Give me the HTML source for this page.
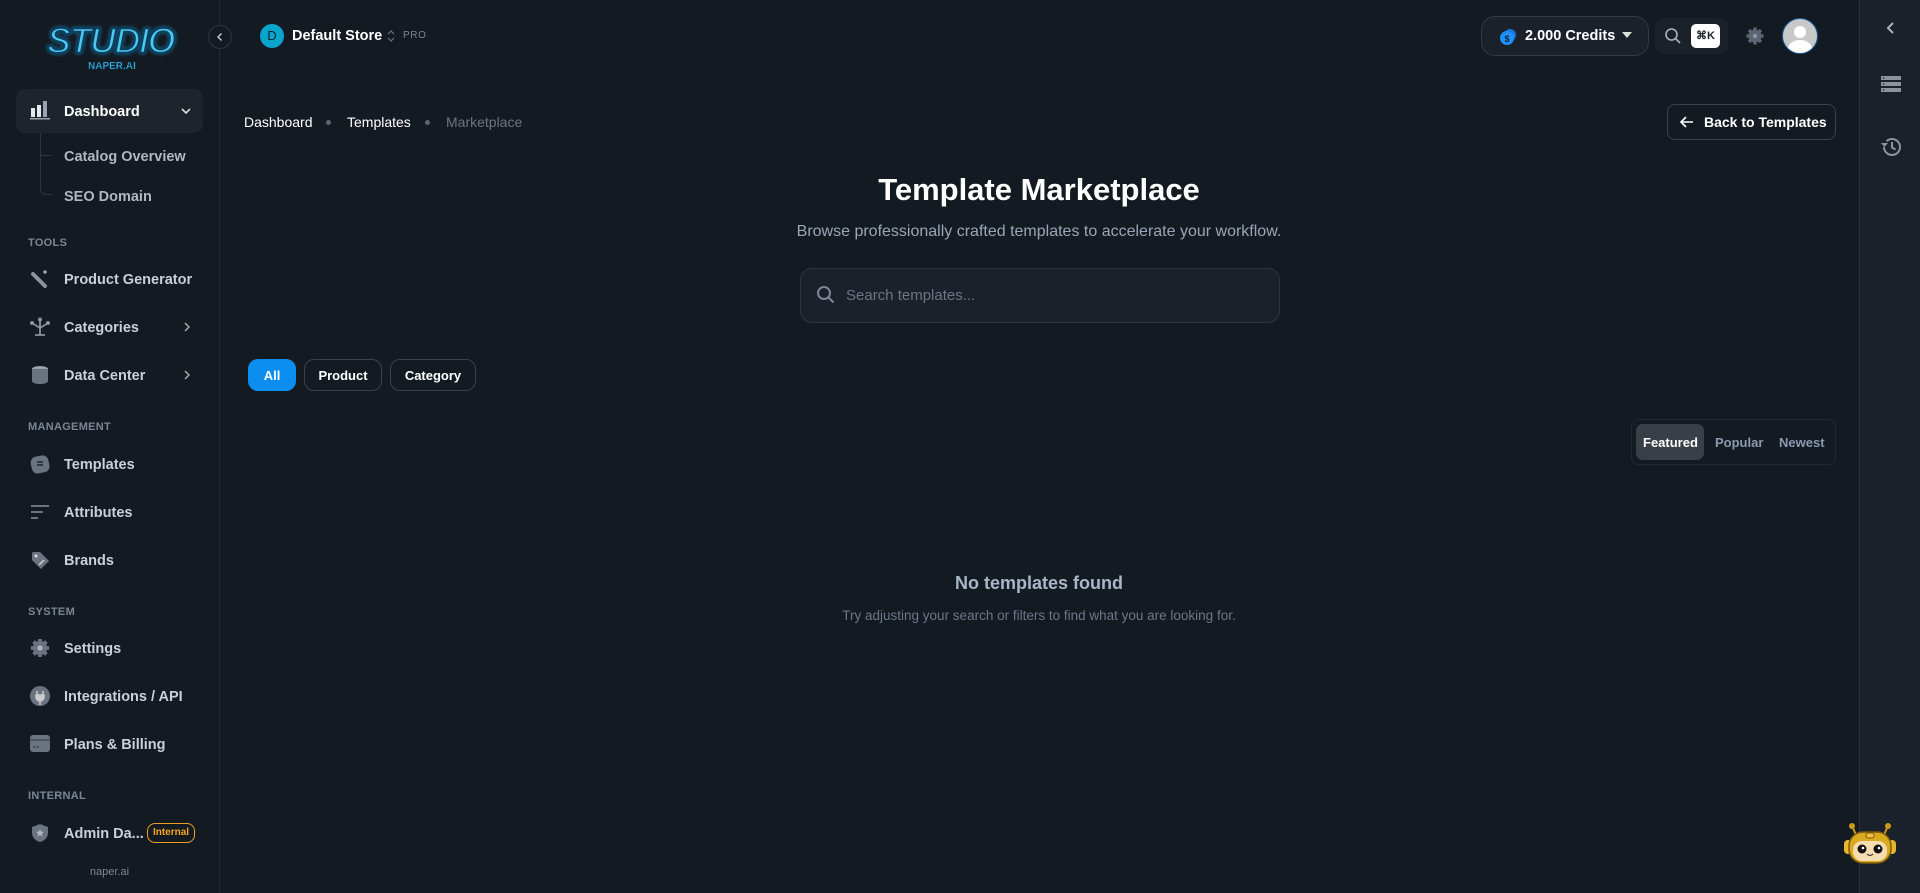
<!DOCTYPE html>
<html><head><meta charset="utf-8"><style>
*{box-sizing:border-box;margin:0;padding:0}
body{width:1920px;height:893px;background:#141a22;font-family:"Liberation Sans",sans-serif;position:relative;overflow:hidden;color:#fff}
.a{position:absolute;white-space:nowrap}
.side{position:absolute;left:0;top:0;width:220px;height:893px;background:#141a22;border-right:1px solid #232a33}
.rail{position:absolute;left:1859px;top:0;width:61px;height:893px;background:#1b212a;border-left:1px solid #2a313b}
.nav{font-size:14.5px;color:#c8d0da;font-weight:bold;margin-top:2px}
.sec{font-size:11px;color:#7b8594;font-weight:bold;letter-spacing:.3px;margin-top:2px}
.ic{position:absolute;left:30px;width:20px;height:20px}
.pill{position:absolute;border:1px solid #3a414b;border-radius:10px;font-size:13px;font-weight:bold;display:flex;align-items:center;justify-content:center}
</style></head><body>
<div class="side">
  <div class="a" style="left:47px;top:20px;font-size:36px;font-weight:900;font-style:italic;color:#4cc8f2;-webkit-text-stroke:2.5px #0b3f5c;letter-spacing:-1.5px;text-shadow:0 0 4px #1a9ad0">STUDIO</div>
  <div class="a" style="left:88px;top:61px;font-size:10px;font-weight:bold;color:#49c9f3;-webkit-text-stroke:.6px #0b3f5c">NAPER.AI</div>
  <div class="a" style="left:16px;top:89px;width:187px;height:44px;background:#1e242c;border-radius:9px"></div>
  <svg class="ic" style="top:100px" viewBox="0 0 20 20"><rect x="1" y="8" width="4" height="9" fill="#e5e7eb"/><rect x="7" y="5" width="4" height="12" fill="#e5e7eb"/><rect x="13" y="1" width="4" height="16" fill="#9ca3af"/><rect x="0" y="18" width="20" height="1.5" fill="#9ca3af"/></svg>
  <div class="a nav" style="left:64px;top:102px;color:#fff">Dashboard</div>
  <svg class="a" style="left:181px;top:106px" width="10" height="10" viewBox="0 0 10 10"><path d="M1 3l4 4 4-4" stroke="#ddd" stroke-width="1.6" fill="none"/></svg>
  <div class="a" style="left:40px;top:133px;width:12px;height:62px;border-left:1.5px solid #2e353f;border-bottom:1.5px solid #2e353f;border-bottom-left-radius:6px"></div>
  <div class="a" style="left:40px;top:155px;width:12px;border-top:1.5px solid #2e353f"></div>
  <div class="a nav" style="left:64px;top:147px;color:#aeb7c2">Catalog Overview</div>
  <div class="a nav" style="left:64px;top:187px;color:#aeb7c2">SEO Domain</div>
  <div class="a sec" style="left:28px;top:235px">TOOLS</div>
  <svg class="ic" style="top:269px" viewBox="0 0 20 20"><path d="M3 5l12 12" stroke="#8b939e" stroke-width="4" stroke-linecap="round"/><path d="M15 1v4M13 3h4" stroke="#bbb" stroke-width="1.2"/></svg>
  <div class="a nav" style="left:64px;top:270px">Product Generator</div>
  <svg class="ic" style="top:317px" viewBox="0 0 20 20"><path d="M10 2v16M5 18h10M2 6l8 5 8-5" stroke="#8b939e" stroke-width="1.8" fill="none"/><circle cx="10" cy="2.5" r="2" fill="#8b939e"/><circle cx="2" cy="6" r="2" fill="#8b939e"/><circle cx="18" cy="6" r="2" fill="#8b939e"/></svg>
  <div class="a nav" style="left:64px;top:318px">Categories</div>
  <svg class="a" style="left:182px;top:322px" width="10" height="10" viewBox="0 0 10 10"><path d="M3 1l4 4-4 4" stroke="#aaa" stroke-width="1.5" fill="none"/></svg>
  <svg class="ic" style="top:365px" viewBox="0 0 20 20"><ellipse cx="10" cy="4" rx="8" ry="3" fill="#9ca3af"/><path d="M2 4v12c0 2 4 3 8 3s8-1 8-3V4" fill="#6b7280"/></svg>
  <div class="a nav" style="left:64px;top:366px">Data Center</div>
  <svg class="a" style="left:182px;top:370px" width="10" height="10" viewBox="0 0 10 10"><path d="M3 1l4 4-4 4" stroke="#aaa" stroke-width="1.5" fill="none"/></svg>
  <div class="a sec" style="left:28px;top:419px">MANAGEMENT</div>
  <svg class="ic" style="top:454px" viewBox="0 0 20 20"><rect x="1" y="2" width="18" height="17" rx="6" fill="#6b7280" transform="rotate(-12 10 10)"/><path d="M7 8h6M7 11h6" stroke="#1e242c" stroke-width="1.5"/></svg>
  <div class="a nav" style="left:64px;top:455px">Templates</div>
  <svg class="ic" style="top:502px" viewBox="0 0 20 20"><path d="M1 4h18M1 10h12M1 16h7" stroke="#6b7280" stroke-width="2"/></svg>
  <div class="a nav" style="left:64px;top:503px">Attributes</div>
  <svg class="ic" style="top:550px" viewBox="0 0 20 20"><path d="M2 3v7l9 9 8-8-9-9H3z" fill="#6b7280"/><circle cx="6" cy="6" r="1.6" fill="#d1d5db"/><path d="M9 15l5-5" stroke="#d1d5db" stroke-width="1.4"/></svg>
  <div class="a nav" style="left:64px;top:551px">Brands</div>
  <div class="a sec" style="left:28px;top:604px">SYSTEM</div>
  <svg class="ic" style="top:638px" viewBox="0 0 20 20"><circle cx="10" cy="10" r="7" fill="#6b7280"/><path d="M10 1v18M1 10h18M3.6 3.6l12.8 12.8M16.4 3.6L3.6 16.4" stroke="#6b7280" stroke-width="4"/><circle cx="10" cy="10" r="2.5" fill="#b0b6be"/></svg>
  <div class="a nav" style="left:64px;top:639px">Settings</div>
  <svg class="ic" style="top:686px" viewBox="0 0 20 20"><circle cx="10" cy="10" r="10" fill="#6b7280"/><path d="M7 5v4M13 5v4M6 9h8v2a4 4 0 01-8 0zM10 14v5" stroke="#ccc" stroke-width="1.5" fill="#ccc"/></svg>
  <div class="a nav" style="left:64px;top:687px">Integrations / API</div>
  <svg class="ic" style="top:734px" viewBox="0 0 20 20"><rect x="0" y="1" width="20" height="17" rx="3" fill="#6b7280"/><rect x="0" y="5" width="20" height="2" fill="#4b5563"/><path d="M3 13h3M7 13h2" stroke="#2b3139" stroke-width="1"/></svg>
  <div class="a nav" style="left:64px;top:735px">Plans &amp; Billing</div>
  <div class="a sec" style="left:28px;top:788px">INTERNAL</div>
  <svg class="ic" style="top:823px" viewBox="0 0 20 20"><path d="M10 1l8 3v6c0 5-4 8-8 9-4-1-8-4-8-9V4z" fill="#6b7280"/><path d="M10 6l1.3 2.6 2.7.3-2 1.9.6 2.7-2.6-1.4-2.6 1.4.6-2.7-2-1.9 2.7-.3z" fill="#b0b6be"/></svg>
  <div class="a nav" style="left:64px;top:824px">Admin Da...</div>
  <div class="a" style="left:147px;top:823px;width:48px;height:20px;border:1px solid #e8a020;border-radius:8px;color:#f5a623;font-size:10px;font-weight:bold;text-align:center;line-height:18px">Internal</div>
  <div class="a" style="left:0;width:219px;top:866px;text-align:center;font-size:11px;color:#7b8594">naper.ai</div>
</div>
<div class="a" style="left:208px;top:25px;width:24px;height:24px;border:1px solid #2e353f;border-radius:50%;background:#141a22"></div>
<svg class="a" style="left:215px;top:32px" width="10" height="10" viewBox="0 0 10 10"><path d="M6.5 1.5L3 5l3.5 3.5" stroke="#ccc" stroke-width="1.4" fill="none"/></svg>
<div class="a" style="left:260px;top:24px;width:24px;height:24px;border-radius:50%;background:#0aa5cc;color:#0b2430;font-size:13px;text-align:center;line-height:24px">D</div>
<div class="a" style="left:292px;top:28px;font-size:14.5px;font-weight:bold">Default Store</div>
<svg class="a" style="left:386px;top:29px" width="10" height="14" viewBox="0 0 10 14"><path d="M2 5l3-3 3 3M2 9l3 3 3-3" stroke="#6b7280" stroke-width="1.2" fill="none"/></svg>
<div class="a" style="left:403px;top:30px;font-size:10px;color:#7b8594;letter-spacing:.6px">PRO</div>
<div class="a" style="left:244px;top:114px;font-size:14px;color:#fff">Dashboard</div>
<div class="a" style="left:326px;top:120px;width:5px;height:5px;border-radius:50%;background:#5b6472"></div>
<div class="a" style="left:347px;top:114px;font-size:14px;color:#fff">Templates</div>
<div class="a" style="left:425px;top:120px;width:5px;height:5px;border-radius:50%;background:#5b6472"></div>
<div class="a" style="left:446px;top:114px;font-size:14px;color:#6b7583">Marketplace</div>
<div class="a" style="left:1481px;top:16px;width:168px;height:40px;border:1px solid #323a45;border-radius:14px;background:#1b212a"></div>
<svg class="a" style="left:1499px;top:28px" width="18" height="18" viewBox="0 0 18 18"><circle cx="11" cy="7" r="6" fill="#1b76d2"/><circle cx="8" cy="10" r="7" fill="#1e8fff"/><text x="8" y="14" font-size="9" fill="#0b2430" text-anchor="middle" font-family="Liberation Sans" font-weight="bold">$</text></svg>
<div class="a" style="left:1525px;top:28px;font-size:14.5px;font-weight:bold">2.000 Credits</div>
<svg class="a" style="left:1622px;top:32px" width="10" height="7" viewBox="0 0 10 7"><path d="M0 0h10L5 6z" fill="#ddd"/></svg>
<div class="a" style="left:1655px;top:18px;width:73px;height:36px;border-radius:10px;background:#1b212a"></div>
<svg class="a" style="left:1664px;top:27px" width="18" height="18" viewBox="0 0 18 18"><circle cx="7.5" cy="7.5" r="5.5" stroke="#aab2bd" stroke-width="1.6" fill="none"/><path d="M11.5 11.5l4.5 4.5" stroke="#aab2bd" stroke-width="1.6"/></svg>
<div class="a" style="left:1691px;top:24px;width:29px;height:24px;border-radius:5px;background:#fff;color:#1b212a;font-size:11px;font-weight:bold;text-align:center;line-height:24px">⌘K</div>
<svg class="a" style="left:1745px;top:26px" width="20" height="20" viewBox="0 0 20 20"><circle cx="10" cy="10" r="6.5" fill="#5b6472"/><path d="M10 1.5v17M1.5 10h17M4 4l12 12M16 4L4 16" stroke="#5b6472" stroke-width="3.5"/><circle cx="10" cy="10" r="2.2" fill="#8b939e"/></svg>
<div class="a" style="left:1782px;top:18px;width:36px;height:36px;border-radius:50%;background:#c8c8c8;border:1.5px solid #1a5a9a;overflow:hidden"><div class="a" style="left:11px;top:7px;width:12px;height:12px;border-radius:50%;background:#fff"></div><div class="a" style="left:5px;top:21px;width:24px;height:18px;border-radius:50%;background:#fff"></div></div>
<div class="a" style="left:1667px;top:104px;width:169px;height:36px;border:1px solid #3a414b;border-radius:8px"></div>
<svg class="a" style="left:1679px;top:114px" width="16" height="16" viewBox="0 0 16 16"><path d="M14 8H2M7 3L2 8l5 5" stroke="#fff" stroke-width="1.6" fill="none"/></svg>
<div class="a" style="left:1704px;top:114px;font-size:14px;font-weight:bold">Back to Templates</div>
<div class="a" style="left:219px;width:1640px;top:172px;text-align:center;font-size:31px;font-weight:bold">Template Marketplace</div>
<div class="a" style="left:219px;width:1640px;top:223px;text-align:center;font-size:16px;color:#9aa6b6">Browse professionally crafted templates to accelerate your workflow.</div>
<div class="a" style="left:800px;top:268px;width:480px;height:55px;border:1px solid #2e353f;border-radius:12px;background:#1b212a"></div>
<svg class="a" style="left:816px;top:285px" width="20" height="20" viewBox="0 0 20 20"><circle cx="8" cy="8" r="6" stroke="#7b8594" stroke-width="2" fill="none"/><path d="M12.5 12.5l5 5" stroke="#7b8594" stroke-width="2"/></svg>
<div class="a" style="left:846px;top:287px;font-size:15px;color:#6b7583">Search templates...</div>
<div class="pill" style="left:248px;top:359px;width:48px;height:32px;background:#0b8ef0;border-color:#0b8ef0">All</div>
<div class="pill" style="left:304px;top:359px;width:78px;height:32px">Product</div>
<div class="pill" style="left:390px;top:359px;width:86px;height:32px">Category</div>
<div class="a" style="left:1631px;top:419px;width:205px;height:46px;border:1px solid #222932;border-radius:8px"></div>
<div class="a" style="left:1636px;top:424px;width:68px;height:36px;border-radius:7px;background:#3a3f47"></div>
<div class="a" style="left:1643px;top:435px;font-size:13px;font-weight:bold">Featured</div>
<div class="a" style="left:1715px;top:435px;font-size:13px;font-weight:bold;color:#8a9ab0">Popular</div>
<div class="a" style="left:1779px;top:435px;font-size:13px;font-weight:bold;color:#8a9ab0">Newest</div>
<div class="a" style="left:219px;width:1640px;top:573px;text-align:center;font-size:18px;font-weight:bold;color:#a9b6c8">No templates found</div>
<div class="a" style="left:219px;width:1640px;top:608px;text-align:center;font-size:13.5px;color:#6b7789">Try adjusting your search or filters to find what you are looking for.</div>
<div class="rail">
  <svg class="a" style="left:25px;top:21px" width="12" height="14" viewBox="0 0 12 14"><path d="M8 2L3 7l5 5" stroke="#aab2bd" stroke-width="2" fill="none"/></svg>
  <svg class="a" style="left:21px;top:75px" width="20" height="18" viewBox="0 0 20 18"><rect x="0" y="1" width="20" height="4" fill="#8b939e"/><rect x="0" y="7" width="20" height="4" fill="#8b939e"/><rect x="0" y="13" width="20" height="4" fill="#8b939e"/><path d="M2 3h1M2 9h1M2 15h1" stroke="#1b212a" stroke-width="1.5"/></svg>
  <svg class="a" style="left:21px;top:137px" width="21" height="20" viewBox="0 0 21 20"><path d="M3 10a8 8 0 102.5-5.8" stroke="#8b939e" stroke-width="2" fill="none"/><path d="M0 6l3.5 4 3.5-4z" fill="#8b939e"/><path d="M11 5v5.5l3.5 2" stroke="#8b939e" stroke-width="2" fill="none"/></svg>
</div>
<div class="a" style="left:1840px;top:822px;width:60px;height:42px">
  <svg width="60" height="42" viewBox="0 0 60 42"><circle cx="12" cy="4" r="3" fill="#c99a1a"/><circle cx="48" cy="4" r="3" fill="#c99a1a"/><path d="M13 6l3 7M47 6l-3 7" stroke="#c99a1a" stroke-width="2"/><rect x="4" y="18" width="8" height="14" rx="4" fill="#e8b730"/><rect x="48" y="18" width="8" height="14" rx="4" fill="#e8b730"/><rect x="9" y="10" width="42" height="31" rx="14" fill="#d9a91f" stroke="#7a5a08" stroke-width="1.5"/><rect x="13" y="19" width="34" height="20" rx="9" fill="#f6dcb0"/><circle cx="22" cy="27" r="4.5" fill="#111"/><circle cx="38" cy="27" r="4.5" fill="#111"/><circle cx="23" cy="26" r="1.3" fill="#fff"/><circle cx="39" cy="26" r="1.3" fill="#fff"/><path d="M27 32q3 3 6 0" stroke="#333" stroke-width="1.2" fill="none"/><rect x="26" y="11" width="8" height="5" rx="2" fill="#f0c040" stroke="#7a5a08"/></svg>
</div>
</body></html>
